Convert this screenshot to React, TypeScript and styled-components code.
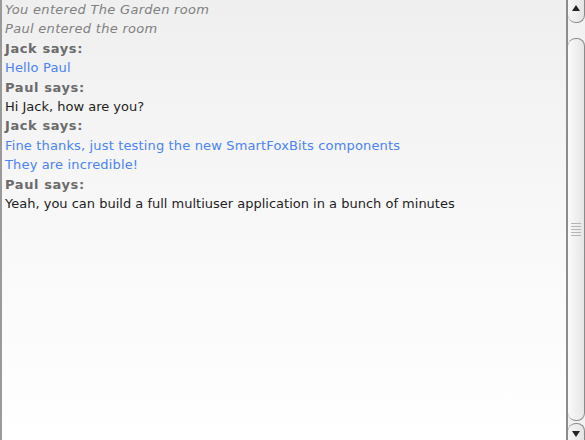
import React from "react";
import styled, { createGlobalStyle } from "styled-components";

const Global = createGlobalStyle`
  html, body { margin: 0; padding: 0; width: 585px; height: 440px; overflow: hidden; background: #fff; }
  #root { width: 585px; height: 440px; }
`;

const Panel = styled.div`
  display: flex;
  width: 585px;
  height: 440px;
  box-sizing: border-box;
  border-left: 2px solid #9a9a9a;
  background: linear-gradient(to bottom, #efefef 0%, #f7f7f7 45%, #ffffff 100%);
`;

const Log = styled.div`
  flex: 1;
  padding: 0 0 0 3px;
  font-family: "DejaVu Sans", "Liberation Sans", sans-serif;
  font-size: 13px;
  line-height: 19.4px;
  overflow: hidden;
`;

type Kind = "system" | "sender" | "mine" | "other";

const colors: Record<Kind, string> = {
  system: "#808080",
  sender: "#6b6b6b",
  mine: "#4b83f2",
  other: "#1e1e1e",
};

const spacing: Record<Kind, string> = {
  system: "0.3px",
  sender: "0.6px",
  mine: "0.15px",
  other: "0",
};

const Line = styled.div<{ $kind: Kind }>`
  color: ${(p) => colors[p.$kind]};
  letter-spacing: ${(p) => spacing[p.$kind]};
  font-style: ${(p) => (p.$kind === "system" ? "italic" : "normal")};
  font-weight: ${(p) => (p.$kind === "sender" ? "bold" : "normal")};
  white-space: nowrap;
`;

const Scrollbar = styled.div`
  width: 17px;
  display: flex;
  flex-direction: column;
  border-left: 2px solid #8c8c8c;
  background: #f2f2f2;
`;

const ArrowBtn = styled.div<{ $down?: boolean }>`
  height: ${(p) => (p.$down ? "17px" : "23px")};
  box-sizing: border-box;
  display: flex;
  align-items: ${(p) => (p.$down ? "flex-end" : "flex-start")};
  justify-content: center;
  padding: ${(p) => (p.$down ? "0 0 3px" : "5px 0 0")};
  background: linear-gradient(to right, #f6f6f6, #e4e4e4);
  border: 1px solid #8a8a8a;
  border-left: none;
  ${(p) =>
    p.$down
      ? "border-bottom: none; border-radius: 8px 8px 0 0;"
      : "border-top: none; border-radius: 0 0 8px 8px;"}
`;

const Track = styled.div`
  flex: 1;
  display: flex;
  padding: 15px 0 2px;
`;

const Thumb = styled.div`
  flex: 1;
  box-sizing: border-box;
  border: 1px solid #8a8a8a;
  border-left: none;
  border-radius: 8px;
  background: linear-gradient(to right, #fafafa, #e6e6e6);
  display: flex;
  align-items: center;
  justify-content: center;
`;

const Grip = styled.div`
  width: 10px;
  height: 13px;
  background: repeating-linear-gradient(to bottom, #b5b5b5 0 1px, transparent 1px 3px);
`;

const Arrow = ({ down }: { down?: boolean }) => (
  <svg width="8" height="6" viewBox="0 0 8 6">
    <path d={down ? "M0 0 L8 0 L4 6 Z" : "M0 6 L8 6 L4 0 Z"} fill="#222" />
  </svg>
);

const lines: { kind: Kind; text: string }[] = [
  { kind: "system", text: "You entered The Garden room" },
  { kind: "system", text: "Paul entered the room" },
  { kind: "sender", text: "Jack says:" },
  { kind: "mine", text: "Hello Paul" },
  { kind: "sender", text: "Paul says:" },
  { kind: "other", text: "Hi Jack, how are you?" },
  { kind: "sender", text: "Jack says:" },
  { kind: "mine", text: "Fine thanks, just testing the new SmartFoxBits components" },
  { kind: "mine", text: "They are incredible!" },
  { kind: "sender", text: "Paul says:" },
  { kind: "other", text: "Yeah, you can build a full multiuser application in a bunch of minutes" },
];

export default function App() {
  return (
    <>
      <Global />
      <Panel>
        <Log>
          {lines.map((l, i) => (
            <Line key={i} $kind={l.kind}>
              {l.text}
            </Line>
          ))}
        </Log>
        <Scrollbar>
          <ArrowBtn>
            <Arrow />
          </ArrowBtn>
          <Track>
            <Thumb>
              <Grip />
            </Thumb>
          </Track>
          <ArrowBtn $down>
            <Arrow down />
          </ArrowBtn>
        </Scrollbar>
      </Panel>
    </>
  );
}
